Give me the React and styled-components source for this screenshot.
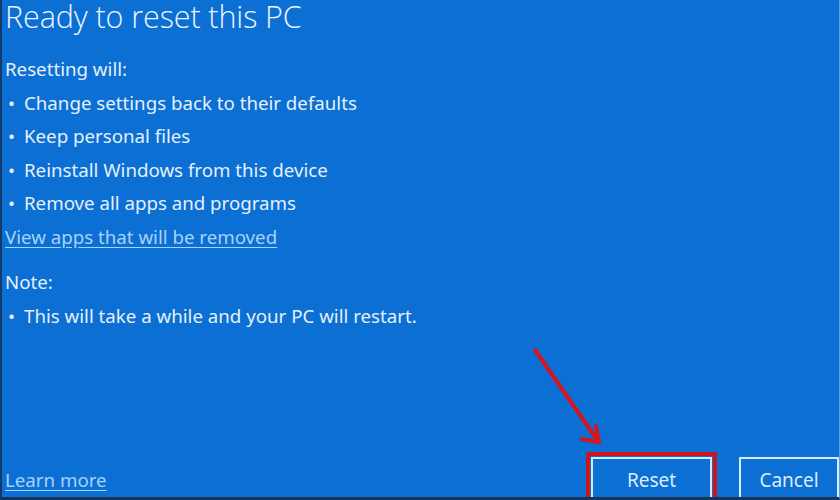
import React from 'react';
import styled, { createGlobalStyle } from 'styled-components';

const GlobalStyle = createGlobalStyle`
  html, body {
    margin: 0;
    padding: 0;
    background: #0a6dd2;
  }
`;

const Window = styled.div`
  position: relative;
  width: 840px;
  height: 500px;
  box-sizing: border-box;
  overflow: hidden;
  background: #0b6fd4;
  border-left: 2px solid #123a6a;
  border-bottom: 3px solid #14355e;
  border-right: 1px solid #5a9fe0;
  display: flex;
  flex-direction: column;
  font-family: 'Noto Sans', 'Open Sans', sans-serif;
  color: #e6f0fb;
`;

const Content = styled.div`
  flex: 1;
  padding: 0 0 0 3px;
`;

const Title = styled.h1`
  margin: 0;
  font-family: 'Open Sans', sans-serif;
  font-weight: 300;
  font-size: 30.5px;
  line-height: 32px;
  letter-spacing: -0.1px;
  color: #eef5fc;
`;

const Label = styled.div`
  font-size: 18.7px;
  line-height: 33.5px;
  margin-top: ${p => p.$gap || 0}px;
`;

const List = styled.ul`
  list-style: none;
  margin: 0;
  padding: 0;
`;

const Item = styled.li`
  display: flex;
  font-size: 18.7px;
  line-height: 33.5px;

  &::before {
    content: '•';
    width: 16px;
    padding-left: 3px;
  }
`;

const Link = styled.a`
  font-size: 18.7px;
  line-height: 33.5px;
  color: #a8d3f8;
  text-decoration: underline;
  text-underline-offset: 3px;
  cursor: pointer;
`;

const Footer = styled.div`
  display: flex;
  align-items: flex-end;
  padding: 0 0 0 3px;
  height: 46px;
`;

const FooterLink = styled(Link)`
  margin-bottom: 1px;
  flex: 1;
`;

const Highlight = styled.div`
  border: 4px solid #d0121f;
  border-bottom: none;
  border-radius: 3px 3px 0 0;
  padding: 1px 1px 0;
  margin-right: 22px;
`;

const Button = styled.button`
  box-sizing: border-box;
  width: ${p => p.$width}px;
  height: 40px;
  background: #0b6fd4;
  border: 2px solid #d6eafb;
  border-bottom: none;
  color: #dcecfb;
  font-family: 'Noto Sans', 'Open Sans', sans-serif;
  font-size: 19px;
  padding: 3px 0 0;
  cursor: pointer;
`;

const Arrow = styled.svg`
  position: absolute;
  left: 520px;
  top: 340px;
  pointer-events: none;
`;

export default function App() {
  return (
    <>
      <GlobalStyle />
      <Window>
        <Content>
          <Title>Ready to reset this PC</Title>
          <Label $gap={20}>Resetting will:</Label>
          <List>
            <Item>Change settings back to their defaults</Item>
            <Item>Keep personal files</Item>
            <Item>Reinstall Windows from this device</Item>
            <Item>Remove all apps and programs</Item>
          </List>
          <Link>View apps that will be removed</Link>
          <Label $gap={12}>Note:</Label>
          <List>
            <Item>This will take a while and your PC will restart.</Item>
          </List>
        </Content>
        <Footer>
          <FooterLink>Learn more</FooterLink>
          <Highlight>
            <Button $width={121}>Reset</Button>
          </Highlight>
          <Button $width={100}>Cancel</Button>
        </Footer>
        <Arrow width="100" height="120" viewBox="0 0 100 120">
          <g stroke="#d8141f" strokeWidth="4" strokeLinecap="round" fill="none">
            <line x1="13" y1="10" x2="76" y2="101" />
            <polyline points="60,99 77,102 74,86" />
          </g>
        </Arrow>
      </Window>
    </>
  );
}
